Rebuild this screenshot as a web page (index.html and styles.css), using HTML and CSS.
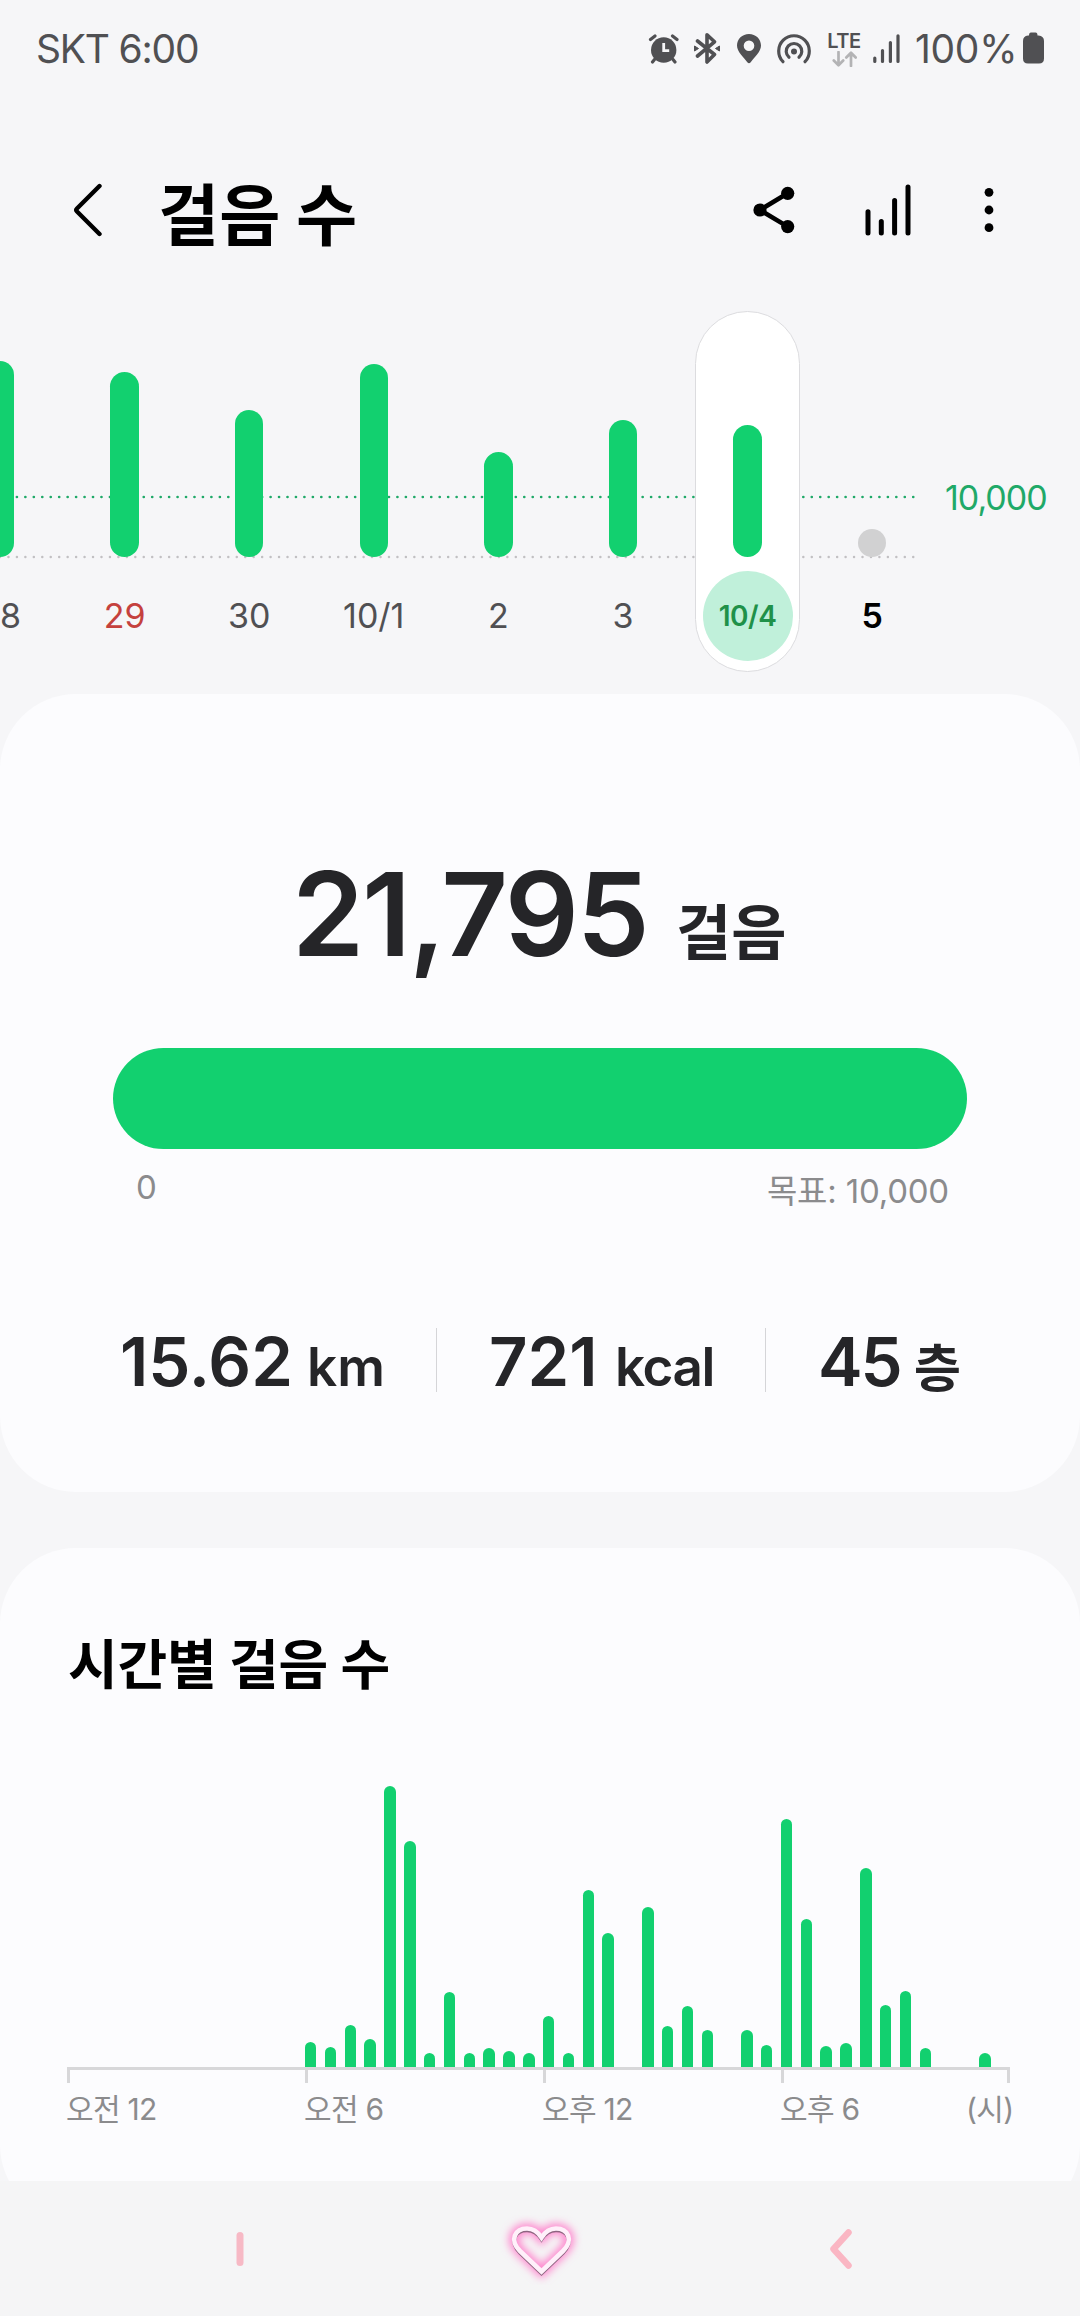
FILE: index.html
```html
<!DOCTYPE html>
<html lang="ko">
<head>
<meta charset="utf-8">
<title>걸음 수</title>
<link rel="stylesheet" href="styles.css">
</head>
<body>
<div class="screen">
  <div class="content">
    <div class="status">
      <span class="carrier">SKT 6:00</span>
      <div class="indicators">
        <svg class="alarm" width="32" height="32" viewBox="0 0 32 32"><circle cx="15.7" cy="18" r="12.7" fill="#505053"/><path d="M2.5 7.6 7 4M29 7.6 24.500 4M6.500 27.500 4.500 30M25 27.500l2 2.500" stroke="#505053" stroke-width="3.200" stroke-linecap="round"/><path d="M15.700 11v7.600h5.500" fill="none" stroke="#f6f6f8" stroke-width="2.800"/></svg>
        <svg class="bt" width="30" height="32" viewBox="0 0 30 32"><path d="M5.500 9 22.500 22.500 15 30V2.800l7.500 7L5.500 24" fill="none" stroke="#505053" stroke-width="3.600" stroke-linejoin="round" stroke-linecap="round"/><path d="M2.500 14v5l4-2.500zM27.500 14v5l-4-2.500z" fill="#505053" stroke="#505053" stroke-linejoin="round"/></svg>
        <svg class="pin" width="26" height="32" viewBox="0 0 26 32"><path fill-rule="evenodd" d="M13 2C6.200 2 1 7 1 13.500 1 20 7.500 25 11.300 30.300q1.700 2 3.400 0C18.500 25 25 20 25 13.500 25 7 19.800 2 13 2zm0 6.500a5.300 5.300 0 1 1 0 10.600 5.300 5.300 0 0 1 0-10.600z" fill="#505053"/></svg>
        <svg class="hotspot" width="36" height="32" viewBox="0 0 36 32"><circle cx="18" cy="19.500" r="3" fill="#505053"/><path d="M13 25.300a7.800 7.800 0 1 1 10 0M7 29.700a15.300 15.300 0 1 1 22 0" fill="none" stroke="#505053" stroke-width="3.200" stroke-linecap="round"/></svg>
        <div class="lte">
          <span>LTE</span>
          <svg width="26" height="16" viewBox="0 0 26 16"><path d="M7.500 1v13M2.800 9.500l4.700 4.700 4.700-4.700M20 15V2M15.300 6.500 20 1.800l4.700 4.700" fill="none" stroke="#b3b3b5" stroke-width="2.700" stroke-linecap="round" stroke-linejoin="round"/></svg>
        </div>
        <svg class="signal" width="28" height="32" viewBox="0 0 28 32"><path d="M2.800 26v3.500M10.500 18.500v11M18.400 10.500v19M26 3.800v25.700" stroke="#505053" stroke-width="3.200" stroke-linecap="round"/></svg>
        <span class="percent">100%</span>
        <svg class="battery" width="22" height="32" viewBox="0 0 22 32"><path d="M7 3.500Q7 .5 9 .5h4.500q2 0 2 3h1Q22 4 22 9v17.500q0 5-5 5H6q-5 0-5-5V9q0-5 5-5.500z" fill="#505053"/></svg>
      </div>
    </div>

    <div class="appbar">
      <svg class="back" width="32" height="56" viewBox="0 0 32 56"><path d="M26.500 4 4 26.500q-1.500 1.500 0 3L26.500 52" fill="none" stroke="#000" stroke-width="4.400" stroke-linecap="round" stroke-linejoin="round"/></svg>
      <h1>걸음 수</h1>
      <svg class="share" width="44" height="50" viewBox="0 0 44 50"><path d="M35.700 8.300 8 25l27.700 16.600" fill="none" stroke="#000" stroke-width="4.600"/><circle cx="8" cy="25" r="6.600"/><circle cx="35.700" cy="8.300" r="6.600"/><circle cx="35.700" cy="41.600" r="6.600"/></svg>
      <svg class="trend" width="48" height="54" viewBox="0 0 48 54"><path d="M4 28.700V50M17.300 38.500V50M30.600 17.500V50M44 4v46" stroke="#000" stroke-width="5" stroke-linecap="round"/></svg>
      <svg class="more" width="12" height="48" viewBox="0 0 12 48"><circle cx="6" cy="6.300" r="4.400"/><circle cx="6" cy="24" r="4.400"/><circle cx="6" cy="41.700" r="4.400"/></svg>
    </div>

    <div class="week">
      <svg class="guides" width="920" height="80" viewBox="0 0 920 80"><path d="M0 10H914" stroke="#1fa968" stroke-width="2.700" stroke-linecap="round" stroke-dasharray="0 8.456"/><path d="M0 70H914" stroke="#c2c0c3" stroke-width="2.500" stroke-linecap="round" stroke-dasharray="0 8.456"/></svg>
      <div class="days">
        <div class="day"><i style="height:196px"></i><span class="first">8</span></div>
        <div class="day sunday"><i style="height:185px"></i><span>29</span></div>
        <div class="day"><i style="height:147px"></i><span>30</span></div>
        <div class="day"><i style="height:192.500px"></i><span>10/1</span></div>
        <div class="day"><i style="height:105px"></i><span>2</span></div>
        <div class="day"><i style="height:137px"></i><span>3</span></div>
        <div class="day selected"><i style="height:131.500px"></i><span>10/4</span></div>
        <div class="day today"><i style="height:28px"></i><span>5</span></div>
      </div>
      <span class="goal">10,000</span>
    </div>

    <section class="card summary">
      <div class="total"><b>21,795</b><span>걸음</span></div>
      <div class="progress"></div>
      <div class="range"><span>0</span><span class="target">목표: 10,000</span></div>
      <div class="stats">
        <div class="stat km"><b>15.62</b><span>km</span></div>
        <div class="stat kcal"><b>721</b><span>kcal</span></div>
        <div class="stat floors"><b>45</b><span class="ko">층</span></div>
      </div>
    </section>

    <section class="card hourly">
      <h2>시간별 걸음 수</h2>
      <div class="bars">
        <i></i><i></i><i></i><i></i><i></i><i></i><i></i><i></i><i></i><i></i><i></i><i></i>
        <i style="height:25px"></i><i style="height:20.300px"></i><i style="height:42px"></i><i style="height:28.300px"></i>
        <i style="height:281px"></i><i style="height:226.300px"></i><i style="height:14px"></i><i style="height:74.700px"></i>
        <i style="height:14px"></i><i style="height:18.700px"></i><i style="height:16px"></i><i style="height:14px"></i>
        <i style="height:50.700px"></i><i style="height:14px"></i><i style="height:177.300px"></i><i style="height:134.300px"></i>
        <i></i><i style="height:160px"></i><i style="height:41px"></i><i style="height:61px"></i>
        <i style="height:37.300px"></i><i></i><i style="height:37px"></i><i style="height:22.300px"></i>
        <i style="height:248px"></i><i style="height:148px"></i><i style="height:21px"></i><i style="height:24px"></i>
        <i style="height:198.700px"></i><i style="height:62px"></i><i style="height:75.700px"></i><i style="height:19px"></i>
        <i></i><i></i><i style="height:14px"></i><i></i>
      </div>
      <div class="axis"><i></i><i></i><i></i><i></i></div>
      <div class="hours"><span>오전 12</span><span>오전 6</span><span>오후 12</span><span>오후 6</span><span class="unit">(시)</span></div>
    </section>
  </div>

  <div class="nav">
    <svg class="recent" width="8" height="36" viewBox="0 0 8 36"><path d="M4 4.500v27" stroke="#f7b9c5" stroke-width="7" stroke-linecap="round"/></svg>
    <svg class="home" width="84" height="84" viewBox="0 0 84 84">
      <defs><filter id="glow" x="-30%" y="-30%" width="160%" height="160%"><feGaussianBlur stdDeviation="4"/></filter></defs>
      <path d="M42.500 64.500 21 44C10 33 16 21.500 28 21.500c7 0 11 3.500 14.500 9 3.500-5.500 7.500-9 14.500-9 12 0 18 11.500 7 22.500z" fill="none" stroke="#ff7fcb" stroke-width="10" filter="url(#glow)"/>
      <path d="M42.500 66.300 21 45.800C10 34.800 16 23.300 28 23.300c7 0 11 3.500 14.500 9 3.500-5.500 7.500-9 14.500-9 12 0 18 11.500 7 22.500z" fill="none" stroke="#8d6580" stroke-width="3.800"/>
      <path d="M42.500 64.500 21 44C10 33 16 21.500 28 21.500c7 0 11 3.500 14.500 9 3.500-5.500 7.500-9 14.500-9 12 0 18 11.500 7 22.500z" fill="none" stroke="#fff0fa" stroke-width="4.600"/>
    </svg>
    <svg class="return" width="24" height="44" viewBox="0 0 24 44"><path d="M19.500 5.500 4.500 22l15 16.500" fill="none" stroke="#fab6c3" stroke-width="6.500" stroke-linecap="round" stroke-linejoin="round"/></svg>
  </div>
</div>
</body>
</html>
```
FILE: styles.css
```css
* { box-sizing: border-box; margin: 0; }
body {
  background: #f6f6f8;
  color: #252528;
  font-family: Inter, "Noto Sans CJK KR", sans-serif;
  font-weight: 400;
  white-space: nowrap;
}
svg { display: block; flex: none; }
.screen { width: 1080px; height: 2316px; overflow: hidden; }
.content { height: 2181px; overflow: hidden; }

.status { display: flex; justify-content: space-between; height: 96px; padding: 0 36px 0 36px; color: #505053; }
.carrier, .percent { font-size: 39px; line-height: 97px; letter-spacing: -1.2px; }
.indicators { display: flex; padding-top: 32px; }
.percent { width: 102px; margin: -32px 0 0 15px; letter-spacing: -0.3px; }
.bt { margin-left: 12px; }
.pin { margin-left: 14px; }
.hotspot { margin-left: 14px; }
.battery { margin-left: 5px; }
.lte { width: 36px; margin-left: 14px; }
.lte span { display: block; font-size: 20px; font-weight: 600; line-height: 18px; text-align: center; letter-spacing: -0.5px; }
.lte svg { margin: 1px auto 0; }
.signal { margin-left: 10px; }

.appbar { display: flex; align-items: center; height: 228px; padding-left: 73px; }
.appbar h1 { width: 594px; margin-left: 53px; padding-top: 12px; color: #000; font-size: 66.500px; font-weight: 700; line-height: 80px; }
.trend { margin-left: 68px; }
.more { margin-left: 71px; }

.week { position: relative; height: 370px; margin-top: -14px; overflow: hidden; }
.guides { position: absolute; left: 0; top: 177px; }
.days { display: flex; margin-left: -62.300px; height: 370px; }
.day { position: relative; display: flex; flex-direction: column; align-items: center; justify-content: flex-end; flex: none; width: 124.600px; height: 361.500px; color: #505053; }
.day i { position: relative; width: 28.500px; border-radius: 15px; background: #12d06f; }
.day span { position: relative; width: 90px; height: 90px; margin: 14px 0 11px; border-radius: 50%; font-size: 34px; line-height: 90px; text-align: center; }
.day .first { padding-left: 21px; }
.sunday span { color: #c5413d; }
.selected::before { content: ""; position: absolute; inset: 1px 10px 0 10px; border: 1px solid #dcdcdf; border-radius: 54px; background: #fff; }
.selected span { background: #c0f0da; color: #1f9149; font-size: 28px; font-weight: 600; letter-spacing: -0.5px; }
.today i { background: #d1d1d2; }
.today span { color: #000; font-weight: 600; }
.goal { position: absolute; left: 945px; top: 164px; color: #1fa968; font-size: 34px; line-height: 48px; letter-spacing: -1px; }

.card { background: #fcfcfe; border-radius: 76px; }
.summary { height: 798px; margin-top: 14px; padding-top: 145px; }
.total { display: flex; padding-left: 292px; height: 150px; }
.total b { width: 384px; font-size: 116px; font-weight: 600; line-height: 150px; letter-spacing: -2.200px; }
.total span { font-size: 60px; font-weight: 600; line-height: 189px; }
.progress { height: 101px; margin: 59px 113px 0; border-radius: 51px; background: #12d06f; }
.range { display: flex; justify-content: space-between; padding: 17px 131px 0 136px; height: 80px; color: #8b8b8d; font-size: 33px; line-height: 42px; letter-spacing: -0.2px; }
.range .target { padding-top: 4px; }
.stats { display: flex; height: 64px; margin: 99px 0 0 120px; }
.stat { display: flex; }
.stat b { font-size: 67px; font-weight: 600; line-height: 68px; }
.stat span { font-size: 53px; font-weight: 600; line-height: 79px; }
.km { width: 317px; border-right: 1px solid #d5d5d8; }
.km b { width: 187px; }
.kcal { width: 329px; padding-left: 52px; border-right: 1px solid #d5d5d8; }
.kcal b { width: 126px; }
.kcal span { letter-spacing: -1.400px; }
.floors { padding-left: 52px; }
.floors b { width: 96px; letter-spacing: -2px; }
.stat .ko { font-size: 51px; font-weight: 600; line-height: 82px; }

.hourly { height: 673px; margin-top: 56px; padding-top: 78px; }
.hourly h2 { padding-left: 68px; color: #000; font-size: 54px; font-weight: 700; line-height: 80px; letter-spacing: -0.2px; }
.bars { display: grid; grid-template-columns: repeat(48, 19.830px); align-items: end; height: 361px; padding-left: 67px; }
.bars i { width: 11.500px; border-radius: 6px 6px 0 0; background: #12d06f; }
.axis { display: grid; grid-template-columns: 238px 238px 238px 229px; width: 943px; height: 16px; margin-left: 67px; border-top: 3px solid #d7d7d9; border-right: 3px solid #d7d7d9; }
.axis i { border-left: 3px solid #d7d7d9; }
.hours { display: flex; margin-left: 66px; color: #8b8b8d; font-size: 30px; line-height: 52px; letter-spacing: -0.700px; }
.hours span { width: 238px; }
.hours .unit { width: 48px; margin-left: -52px; }

.nav { display: flex; align-items: center; height: 135px; padding-left: 235.500px; background: #f5f5f6; }
.home { margin-left: 255px; }
.return { margin-left: 246px; }
```
